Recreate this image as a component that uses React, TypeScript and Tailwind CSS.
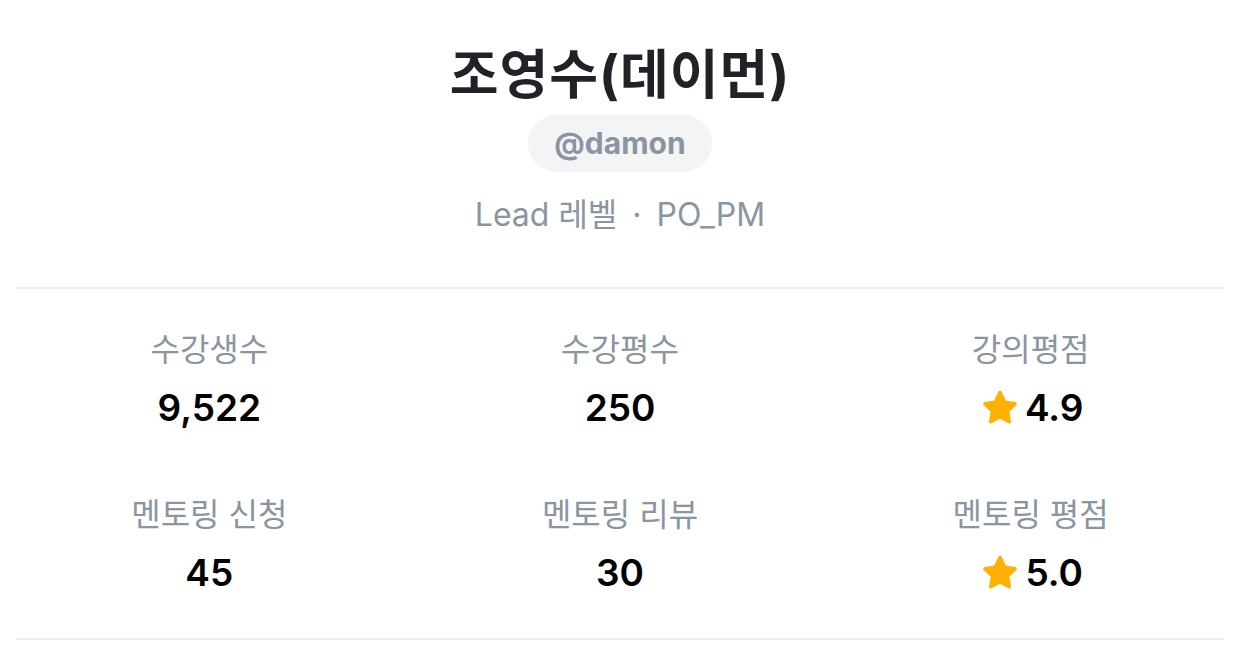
const stats = [
  { label: "수강생수", value: "9,522" },
  { label: "수강평수", value: "250" },
  { label: "강의평점", value: "4.9", star: true },
  { label: "멘토링 신청", value: "45" },
  { label: "멘토링 리뷰", value: "30" },
  { label: "멘토링 평점", value: "5.0", star: true },
];

const Star = () => (
  <svg viewBox="0 0 24 24" className="w-[44px] h-[44px]" fill="#ffb000">
    <path d="M12 2.6c.4 0 .7.2.9.6l2.3 4.7 5.2.8c.8.1 1.1 1.1.5 1.7l-3.8 3.7.9 5.2c.1.8-.7 1.4-1.4 1l-4.6-2.5-4.6 2.5c-.7.4-1.6-.2-1.4-1l.9-5.2-3.8-3.7c-.6-.6-.3-1.6.5-1.7l5.2-.8 2.3-4.7c.2-.4.5-.6.9-.6z" />
  </svg>
);

export default function App() {
  return (
    <div
      className="w-[1240px] h-[653px] bg-white px-4 flex flex-col items-center"
      style={{ fontFamily: 'Inter, "Noto Sans CJK KR", sans-serif' }}
    >
      <h1 className="mt-[43px] text-[53px] leading-[64px] font-bold text-[#1f2328] tracking-[1px]">
        조영수(데이먼)
      </h1>
      <div className="mt-[8px] h-[57px] px-[26px] rounded-full bg-[#f2f4f6] flex items-center">
        <span className="text-[30px] font-bold text-[#8b95a1]">@damon</span>
      </div>
      <p className="mt-[23px] text-[32px] leading-[40px] text-[#8b95a1]">
        Lead 레벨 <span className="mx-[6px]">·</span> PO_PM
      </p>
      <div className="mt-[52px] w-full border-t-2 border-[#eceef0]" />
      <div className="w-full grid grid-cols-3 gap-x-6 gap-y-[64px] pt-[41px] pb-[42px]">
        {stats.map((s) => (
          <div key={s.label} className="flex flex-col items-center">
            <span className="text-[32px] leading-[40px] text-[#8b95a1]">{s.label}</span>
            <span className="mt-[15px] flex items-center gap-[3px] text-[37px] leading-[46px] font-semibold text-black">
              {s.star && <Star />}
              {s.value}
            </span>
          </div>
        ))}
      </div>
      <div className="w-full border-t-2 border-[#eceef0]" />
    </div>
  );
}
